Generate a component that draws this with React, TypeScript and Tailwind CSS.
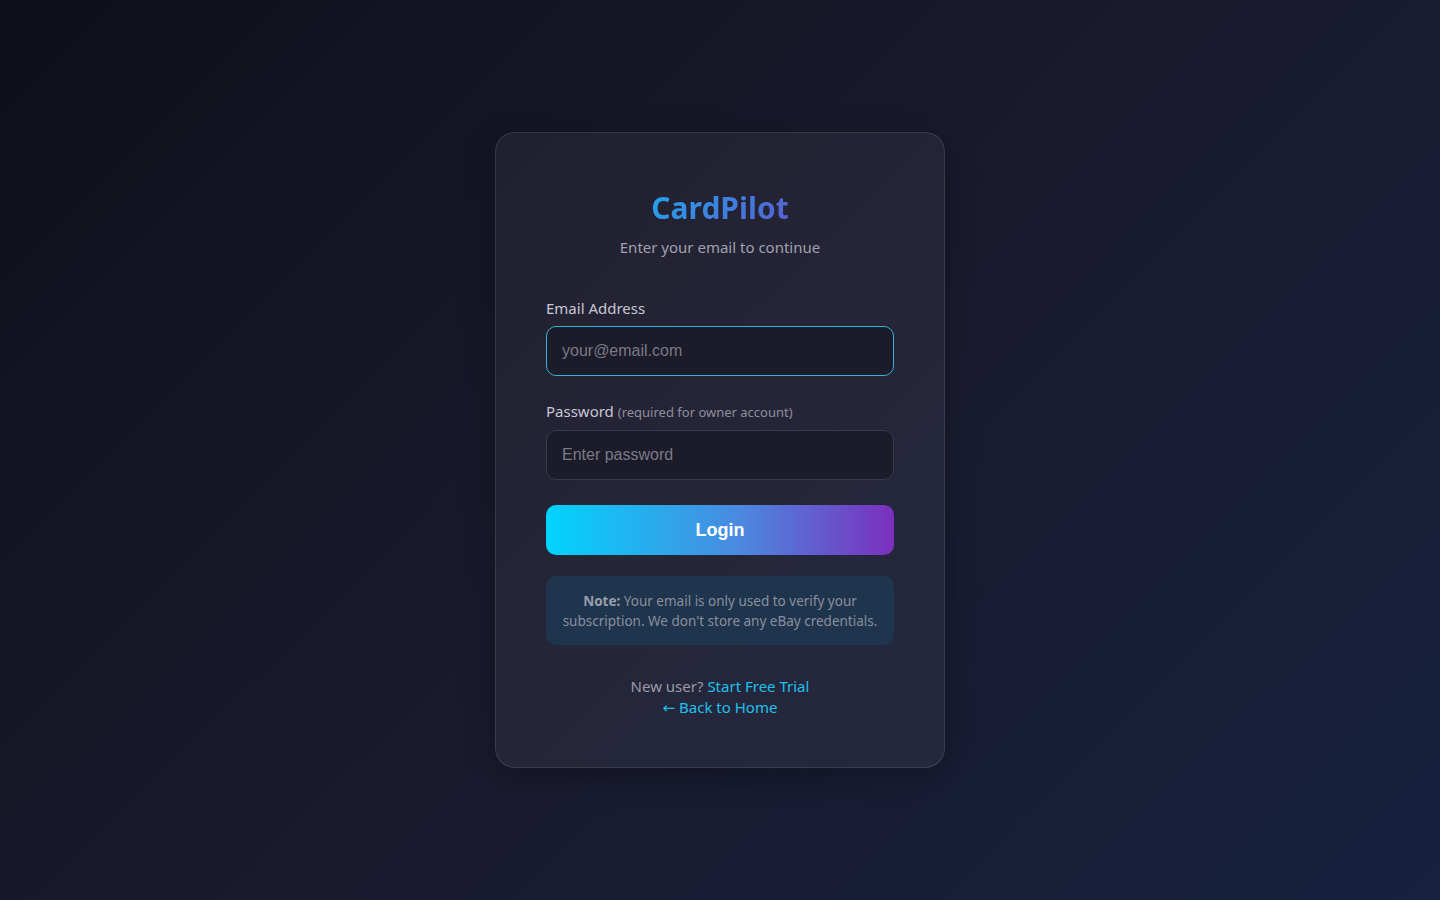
import { useState } from 'react';

export default function App() {
  const [email, setEmail] = useState('');
  const [password, setPassword] = useState('');

  return (
    <div
      className="min-h-screen w-full flex items-center justify-center bg-[linear-gradient(135deg,#0f0f1a_0%,#1a1a2e_50%,#16213e_100%)]"
      style={{ fontFamily: '"Noto Sans", "Open Sans", sans-serif' }}
    >
      <div className="w-[450px] rounded-[20px] border border-white/10 bg-white/5 px-[50px] pt-[51px] pb-[48px] shadow-[0_8px_32px_rgba(0,0,0,0.3)]">
        <h1 className="text-center text-[30px] leading-[48px] font-bold bg-[linear-gradient(135deg,#00d4ff_0%,#7b2fbe_100%)] bg-clip-text text-transparent">
          CardPilot
        </h1>
        <p className="mt-[4px] text-center text-[15px] leading-[22px] text-[#a0a0b0]">
          Enter your email to continue
        </p>

        <form className="mt-[39px]" onSubmit={(e) => e.preventDefault()}>
          <label className="block text-[15px] leading-[22px] text-[#c8c8d4] mb-[7px]">Email Address</label>
          <input
            type="email"
            value={email}
            onChange={(e) => setEmail(e.target.value)}
            placeholder="your@email.com"
            className="block w-full h-[50px] rounded-[10px] border border-[#2fb4dc] bg-[#1b1b29] px-[15px] text-[16px] text-white placeholder:text-[#7a7a86] outline-none"
            style={{ fontFamily: '"Liberation Sans", Arial, sans-serif' }}
          />

          <label className="block mt-[24px] text-[15px] leading-[22px] text-[#c8c8d4] mb-[7px]">
            Password <span className="text-[13px] text-[#8e8e9c]">(required for owner account)</span>
          </label>
          <input
            type="password"
            value={password}
            onChange={(e) => setPassword(e.target.value)}
            placeholder="Enter password"
            className="block w-full h-[50px] rounded-[10px] border border-[#3a3a4c] bg-[#1b1b29] px-[15px] text-[16px] text-white placeholder:text-[#7a7a86] outline-none"
            style={{ fontFamily: '"Liberation Sans", Arial, sans-serif' }}
          />

          <button
            type="submit"
            className="mt-[25px] block w-full h-[50px] rounded-[10px] bg-[linear-gradient(90deg,#00d4ff_0%,#4a8ae0_55%,#7b2fbe_100%)] text-[18px] font-bold text-white"
            style={{ fontFamily: '"Liberation Sans", Arial, sans-serif' }}
          >
            Login
          </button>
        </form>

        <div className="mt-[21px] rounded-[10px] bg-[#1f354d] px-[12px] pt-[15px] pb-[14px] text-center text-[13.5px] leading-[20px] text-[#8a8e9e]">
          <strong className="font-bold text-[#9a9eac]">Note:</strong> Your email is only used to verify your subscription. We don't store any eBay credentials.
        </div>

        <div className="mt-[31px] text-center text-[15px] leading-[21px] text-[#9a9aa8]">
          <p>
            New user? <a href="#" className="text-[#1fc0ec]">Start Free Trial</a>
          </p>
          <p>
            <a href="#" className="text-[#1fc0ec]">
              <span style={{ fontFamily: '"DejaVu Sans", sans-serif' }}>←</span> Back to Home
            </a>
          </p>
        </div>
      </div>
    </div>
  );
}
